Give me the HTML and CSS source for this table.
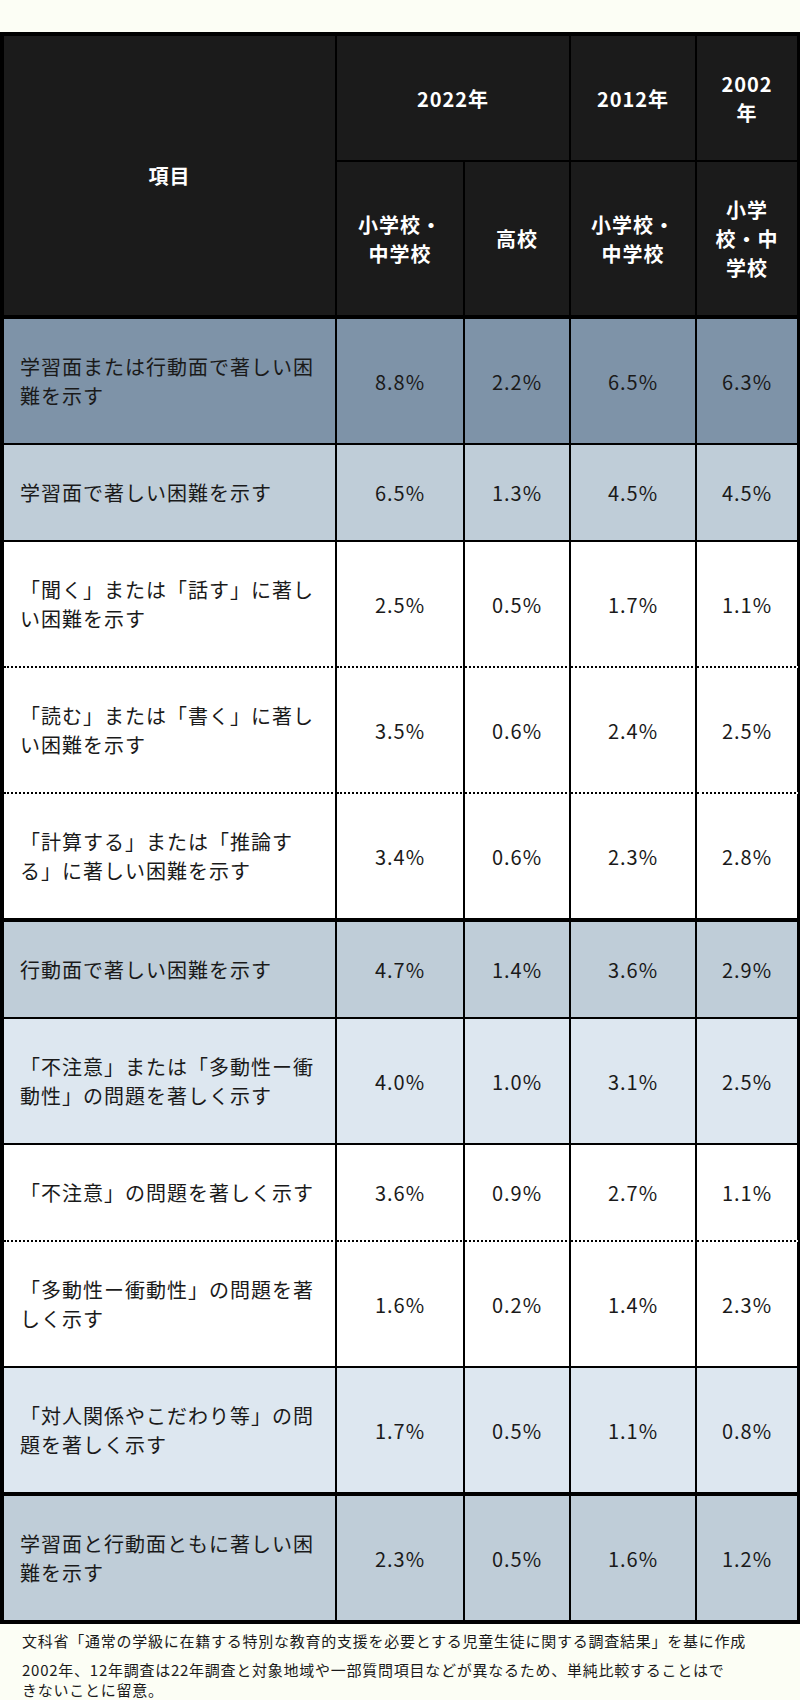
FILE: index.html
```html
<!DOCTYPE html>
<html lang="ja">
<head>
<meta charset="utf-8">
<title>通常の学級に在籍する特別な教育的支援を必要とする児童生徒</title>
<link rel="stylesheet" href="styles.css">
</head>
<body>
<main class="page">
  <table class="survey">
    <colgroup>
      <col class="c-item">
      <col class="c-a">
      <col class="c-b">
      <col class="c-c">
      <col class="c-d">
    </colgroup>
    <thead>
      <tr>
        <th rowspan="2" class="h-item">項目</th>
        <th colspan="2">2022年</th>
        <th>2012年</th>
        <th class="h-last">2002年</th>
      </tr>
      <tr class="h-sub">
        <th>小学校・中学校</th>
        <th>高校</th>
        <th>小学校・中学校</th>
        <th class="h-last">小学校・中学校</th>
      </tr>
    </thead>
    <tbody>
      <tr class="r-main">
        <td>学習面または行動面で著しい困難を示す</td>
        <td>8.8%</td><td>2.2%</td><td>6.5%</td><td>6.3%</td>
      </tr>
      <tr class="r-mid">
        <td>学習面で著しい困難を示す</td>
        <td>6.5%</td><td>1.3%</td><td>4.5%</td><td>4.5%</td>
      </tr>
      <tr class="r-white dotted">
        <td>「聞く」または「話す」に著しい困難を示す</td>
        <td>2.5%</td><td>0.5%</td><td>1.7%</td><td>1.1%</td>
      </tr>
      <tr class="r-white dotted">
        <td>「読む」または「書く」に著しい困難を示す</td>
        <td>3.5%</td><td>0.6%</td><td>2.4%</td><td>2.5%</td>
      </tr>
      <tr class="r-white group-end">
        <td>「計算する」または「推論する」に著しい困難を示す</td>
        <td>3.4%</td><td>0.6%</td><td>2.3%</td><td>2.8%</td>
      </tr>
      <tr class="r-mid">
        <td>行動面で著しい困難を示す</td>
        <td>4.7%</td><td>1.4%</td><td>3.6%</td><td>2.9%</td>
      </tr>
      <tr class="r-light">
        <td>「不注意」または「多動性ー衝動性」の問題を著しく示す</td>
        <td>4.0%</td><td>1.0%</td><td>3.1%</td><td>2.5%</td>
      </tr>
      <tr class="r-white dotted">
        <td>「不注意」の問題を著しく示す</td>
        <td>3.6%</td><td>0.9%</td><td>2.7%</td><td>1.1%</td>
      </tr>
      <tr class="r-white">
        <td>「多動性ー衝動性」の問題を著しく示す</td>
        <td>1.6%</td><td>0.2%</td><td>1.4%</td><td>2.3%</td>
      </tr>
      <tr class="r-light group-end">
        <td>「対人関係やこだわり等」の問題を著しく示す</td>
        <td>1.7%</td><td>0.5%</td><td>1.1%</td><td>0.8%</td>
      </tr>
      <tr class="r-mid group-end">
        <td>学習面と行動面ともに著しい困難を示す</td>
        <td>2.3%</td><td>0.5%</td><td>1.6%</td><td>1.2%</td>
      </tr>
    </tbody>
  </table>
  <div class="notes">
    <p class="note">文科省「通常の学級に在籍する特別な教育的支援を必要とする児童生徒に関する調査結果」を基に作成</p>
    <p class="note note-narrow">2002年、12年調査は22年調査と対象地域や一部質問項目などが異なるため、単純比較することはできないことに留意。</p>
  </div>
</main>
</body>
</html>
```

FILE: styles.css
```css
html, body {
  margin: 0;
  padding: 0;
  background: #fcfef5;
}

body {
  font-family: "Noto Sans CJK JP", "Noto Sans", sans-serif;
  color: #1a1a1a;
}

.page {
  width: 800px;
  padding-top: 32px;
}

.survey {
  width: 800px;
  table-layout: fixed;
  border-collapse: separate;
  border-spacing: 0;
  border-top: 4px solid #000;
  border-left: 4px solid #000;
  font-size: 20px;
  line-height: 29px;
  letter-spacing: 1px;
}

.c-item { width: 333px; }
.c-a { width: 128px; }
.c-b { width: 106px; }
.c-c { width: 126px; }
.c-d { width: 103px; }

.survey th,
.survey td {
  border-right: 2px solid #000;
  border-bottom: 2px solid #000;
  padding: 33px 14px;
  text-align: center;
  vertical-align: middle;
}

.survey th:last-child,
.survey td:last-child {
  border-right-width: 3px;
}

.survey th {
  background: #1b1b1b;
  color: #fff;
  font-weight: 700;
}

.survey th.h-last {
  padding-left: 17px;
  padding-right: 17px;
}

.survey th.h-item,
.h-sub th {
  border-bottom-width: 4px;
}

.survey td:first-child {
  text-align: left;
  padding-left: 16px;
  padding-right: 16px;
}

.r-main td { background: #7e93a8; }
.r-mid td { background: #bfcdd8; }
.r-light td { background: #dde7f0; }
.r-white td { background: #ffffff; }

.dotted td {
  border-bottom-style: dotted;
}

.group-end td {
  border-bottom-width: 4px;
}

.notes {
  padding: 7px 0 0 22px;
}

.note {
  margin: 0 0 9px;
  font-size: 15px;
  line-height: 20px;
  letter-spacing: 0.75px;
  color: #1a1a1a;
}

.note-narrow {
  width: 705px;
}
```
